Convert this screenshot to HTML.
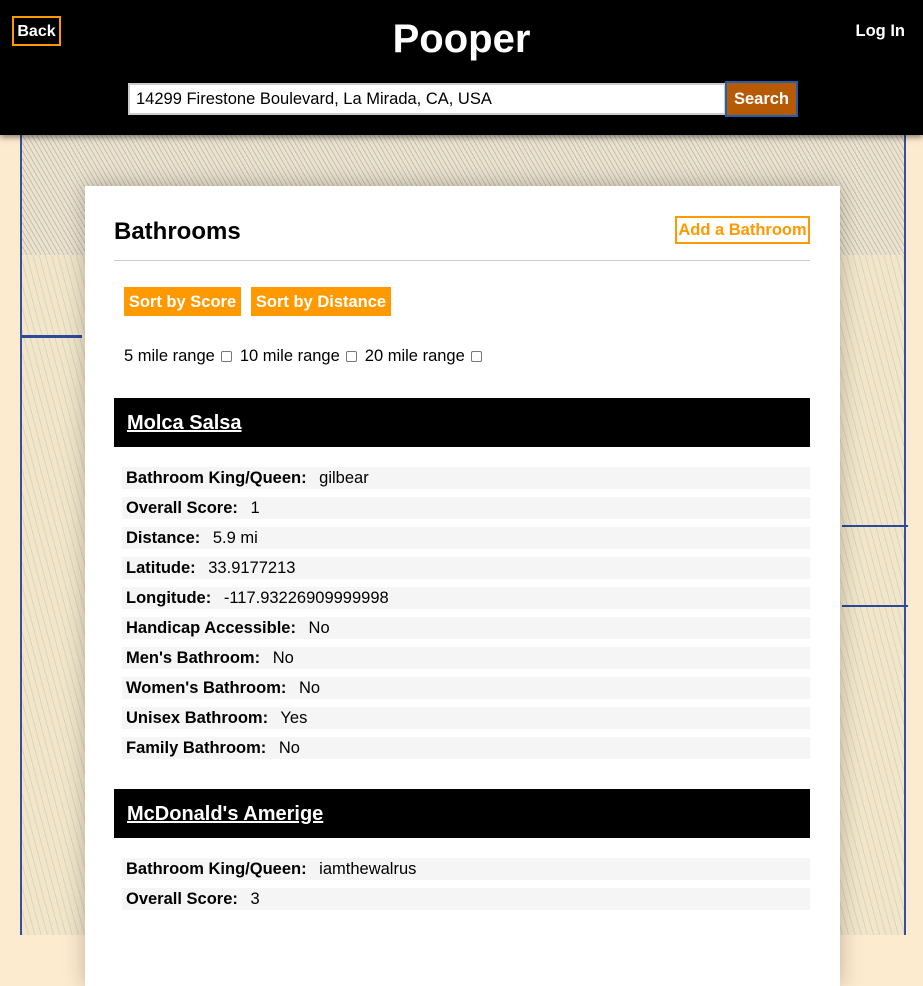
<!DOCTYPE html>
<html><head><style>
*{margin:0;padding:0;box-sizing:border-box}
body{width:923px;height:901px;overflow:hidden;background:#fdebd0;font-family:"Liberation Sans",sans-serif;position:relative}
.map{position:absolute;left:20px;top:135px;width:886px;height:800px;background:repeating-linear-gradient(75deg,#d9d3c6 0 1px,#f2e6c9 1px 6px),#f2e6c9;border-left:2px solid #3a4f9a;border-right:2px solid #3a4f9a}
.map .hills{position:absolute;left:0;top:0;right:0;height:120px;background:repeating-linear-gradient(60deg,#b9bbc8 0 1px,#efe3c6 1px 4px),#e6dcc6;opacity:.9}
.map .l{position:absolute;background:#2d4a9a}
header{position:absolute;left:0;top:0;width:923px;height:135px;background:#000;box-shadow:0 2px 6px rgba(0,0,0,.5)}
.back{position:absolute;left:12px;top:16px;width:49px;height:30px;border:2px solid #f90;color:#fff;font-weight:bold;font-size:16px;line-height:27px;text-align:center}
.title{position:absolute;left:0;width:923px;top:17px;text-align:center;color:#fff;font-weight:bold;font-size:40px}
.login{position:absolute;right:18px;top:22px;color:#fff;font-weight:bold;font-size:16.5px}
.inp{position:absolute;left:128px;top:83px;width:598px;height:32px;background:#fff;border:2px solid #ccc;font-size:16.5px;padding-left:6px;line-height:29px;color:#000}
.sbtn{position:absolute;left:725px;top:81px;width:73px;height:36px;background:#b75a06;border:2px solid #1f5fb0;color:#fff;font-weight:bold;font-size:16.5px;text-align:center;line-height:33px}
.card{position:absolute;left:85px;top:186px;width:755px;height:800px;background:#fff;box-shadow:0 0 20px rgba(0,0,0,.25)}
h2{position:absolute;left:29px;top:32px;font-size:24px;font-weight:bold}
.add{position:absolute;left:590px;top:30px;width:135px;height:28px;border:2px solid #f90;color:#f90;font-weight:bold;font-size:16.5px;line-height:25px;text-align:center}
.hr{position:absolute;left:29px;top:74px;width:696px;height:1px;background:#ccc}
.ob{position:absolute;top:101px;height:29px;background:#f90;color:#fff;font-weight:bold;font-size:16.5px;line-height:30px;text-align:center}
.rng{position:absolute;left:39px;top:161px;font-size:16.5px}
.cb{display:inline-block;width:11px;height:11px;border:1px solid #777;border-radius:2px;margin:0 8px 0 6px;vertical-align:-1px}
.bar{position:absolute;left:29px;width:696px;height:49px;background:#000;color:#fff;font-weight:bold;font-size:20px;padding-left:13px;line-height:51px;text-decoration:underline}
.row{position:absolute;left:37px;width:688px;height:22px;background:#f5f5f5;font-size:16.5px;line-height:23px;padding-left:4px}
.row b{margin-right:8px}
</style></head><body>
<div class="map"><div class="hills"></div>
<div class="l" style="left:0;top:200px;width:60px;height:3px"></div>
<div class="l" style="left:820px;top:390px;width:66px;height:2px"></div>
<div class="l" style="left:820px;top:470px;width:66px;height:2px"></div>
</div>
<header>
<div class="back">Back</div>
<div class="title">Pooper</div>
<div class="login">Log In</div>
<div class="inp">14299 Firestone Boulevard, La Mirada, CA, USA</div>
<div class="sbtn">Search</div>
</header>
<div class="card">
<h2>Bathrooms</h2>
<div class="add">Add a Bathroom</div>
<div class="hr"></div>
<div class="ob" style="left:39px;width:117px">Sort by Score</div>
<div class="ob" style="left:166px;width:140px">Sort by Distance</div>
<div class="rng">5 mile range<span class="cb"></span>10 mile range<span class="cb"></span>20 mile range<span class="cb"></span></div>
<div class="bar" style="top:212px">Molca Salsa</div>
<div class="row" style="top:281px"><b>Bathroom King/Queen:</b> gilbear</div>
<div class="row" style="top:311px"><b>Overall Score:</b> 1</div>
<div class="row" style="top:341px"><b>Distance:</b> 5.9 mi</div>
<div class="row" style="top:371px"><b>Latitude:</b> 33.9177213</div>
<div class="row" style="top:401px"><b>Longitude:</b> -117.93226909999998</div>
<div class="row" style="top:431px"><b>Handicap Accessible:</b> No</div>
<div class="row" style="top:461px"><b>Men's Bathroom:</b> No</div>
<div class="row" style="top:491px"><b>Women's Bathroom:</b> No</div>
<div class="row" style="top:521px"><b>Unisex Bathroom:</b> Yes</div>
<div class="row" style="top:551px"><b>Family Bathroom:</b> No</div>
<div class="bar" style="top:603px">McDonald's Amerige</div>
<div class="row" style="top:672px"><b>Bathroom King/Queen:</b> iamthewalrus</div>
<div class="row" style="top:702px"><b>Overall Score:</b> 3</div>
</div>
</body></html>
